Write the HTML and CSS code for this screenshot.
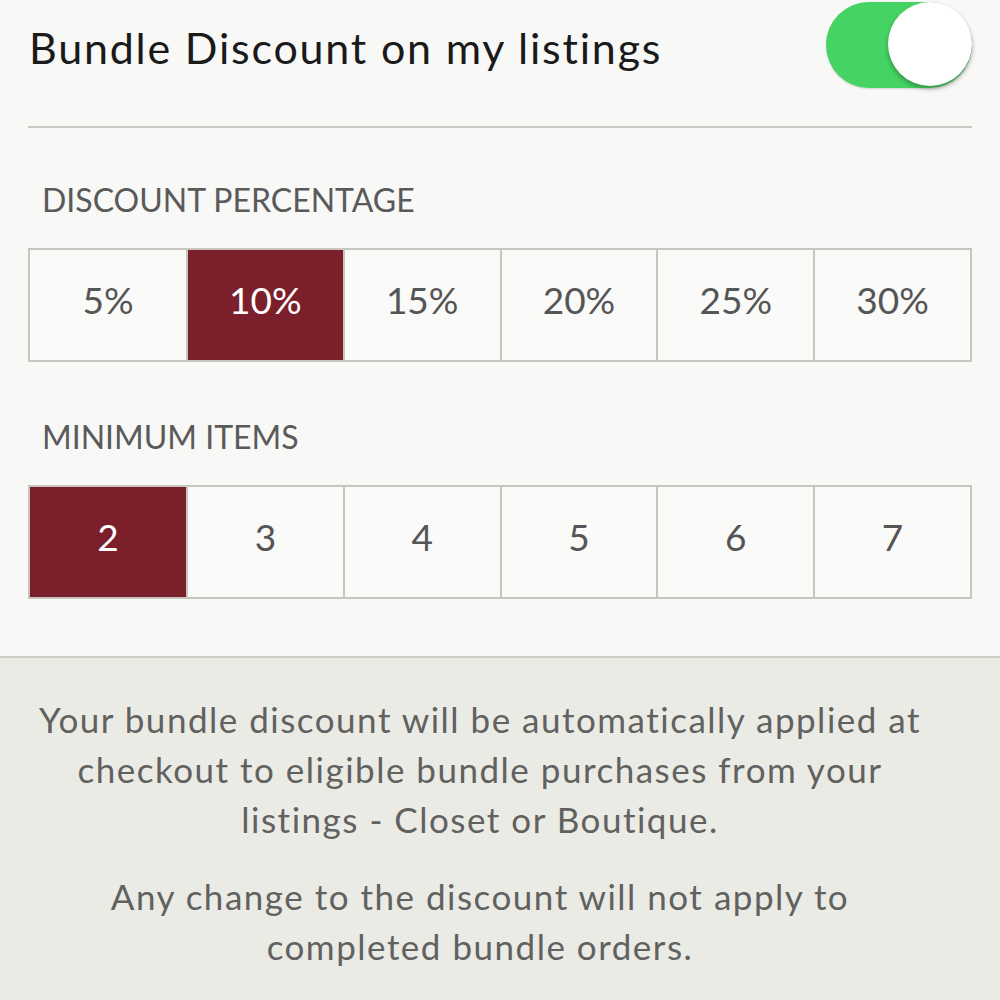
FILE: index.html
```html
<!DOCTYPE html>
<html>
<head>
<meta charset="utf-8">
<link rel="stylesheet" href="styles.css">
</head>
<body>
<div class="page">
  <section class="main">
    <div class="header">
      <span class="title">Bundle Discount on my listings</span>
      <div class="toggle"><div class="knob"></div></div>
    </div>
    <div class="divider"></div>
    <div class="label">DISCOUNT PERCENTAGE</div>
    <div class="grid">
      <div class="cell">5%</div>
      <div class="cell selected">10%</div>
      <div class="cell">15%</div>
      <div class="cell">20%</div>
      <div class="cell">25%</div>
      <div class="cell">30%</div>
    </div>
    <div class="label label2">MINIMUM ITEMS</div>
    <div class="grid">
      <div class="cell selected">2</div>
      <div class="cell">3</div>
      <div class="cell">4</div>
      <div class="cell">5</div>
      <div class="cell">6</div>
      <div class="cell">7</div>
    </div>
  </section>
  <section class="footer">
    <p class="note">Your bundle discount will be automatically applied at checkout to eligible bundle purchases from your listings - Closet or Boutique.</p>
    <p class="note note2">Any change to the discount will not apply to completed bundle orders.</p>
  </section>
</div>
</body>
</html>
```
FILE: styles.css
```css
html, body {
  margin: 0;
  padding: 0;
  background: #f8f8f6;
  font-family: "Lato", "Liberation Sans", sans-serif;
}
.page {
  width: 1000px;
  height: 1000px;
  overflow: hidden;
  display: flex;
  flex-direction: column;
}
.main {
  padding: 0 28px;
  height: 656px;
  box-sizing: border-box;
}
.header {
  display: flex;
  align-items: center;
  justify-content: space-between;
  height: 92px;
  padding-left: 1px;
}
.title {
  font-size: 43px;
  letter-spacing: 1.8px;
  color: #1a1a1a;
  margin-top: 2px;
}
.toggle {
  width: 146px;
  height: 86px;
  border-radius: 43px;
  background: #45d463;
  margin-top: -2px;
  display: flex;
  justify-content: flex-end;
  align-items: center;
  box-shadow: 0 1px 2px rgba(0,0,0,0.15);
}
.knob {
  width: 84px;
  height: 84px;
  border-radius: 50%;
  background: #ffffff;
  box-shadow: 0 3px 5px rgba(0,0,0,0.3);
  margin-top: -3px;
}
.divider {
  height: 2px;
  background: #c9c9c2;
  margin-top: 34px;
}
.label {
  font-size: 32px;
  color: #5a5a5a;
  padding-left: 14px;
  margin-top: 54px;
  line-height: 36px;
}
.label2 {
  margin-top: 57px;
}
.grid {
  display: grid;
  grid-template-columns: 156px repeat(5, 1fr);
  border: 2px solid #c6c6bf;
  margin-top: 30px;
  height: 114px;
  box-sizing: border-box;
}
.cell {
  display: flex;
  align-items: center;
  justify-content: center;
  font-size: 37px;
  padding-bottom: 12px;
  color: #555555;
  border-left: 2px solid #c6c6bf;
  background: #fafaf8;
}
.cell:first-child {
  border-left: none;
}
.cell.selected {
  background: #7b202b;
  color: #ffffff;
}
.footer {
  flex: 1;
  background: #ebebe5;
  border-top: 2px solid #cdcdc6;
  padding: 36px 60px 0 20px;
}
.note {
  margin: 0;
  text-align: center;
  font-size: 35px;
  letter-spacing: 1.5px;
  line-height: 50px;
  color: #616160;
}
.note2 {
  margin-top: 27px;
}
```
